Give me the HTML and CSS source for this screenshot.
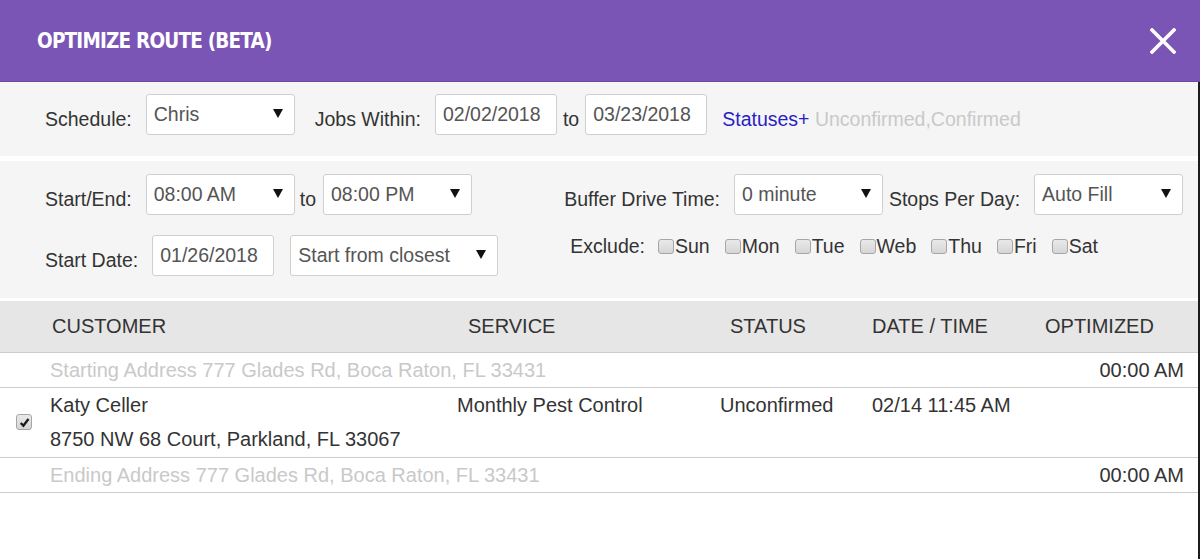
FILE: index.html
```html
<!DOCTYPE html>
<html>
<head>
<meta charset="utf-8">
<title>Optimize Route</title>
<link rel="stylesheet" href="styles.css">
</head>
<body>
<div class="modal">
  <header class="titlebar">
    <h1 class="title">OPTIMIZE ROUTE (BETA)</h1>
    <span class="close" aria-label="Close">
      <svg width="26" height="26" viewBox="0 0 26 26"><path d="M2 2 L24 24 M24 2 L2 24" stroke="#fff" stroke-width="3.6" stroke-linecap="square" fill="none"/></svg>
    </span>
  </header>
  <div class="content">
    <section class="panel panel-top">
      <span class="label">Schedule:</span>
      <div class="field select w-149"><span>Chris</span><svg class="arrow" width="10" height="9" viewBox="0 0 10 9"><path d="M0 0 H10 L5 9 Z" fill="#111"/></svg></div>
      <span class="label ml-20">Jobs Within:</span>
      <div class="field w-122">02/02/2018</div>
      <span class="label to">to</span>
      <div class="field w-122">03/23/2018</div>
      <span class="label statuses"><span class="link">Statuses+</span> <span class="muted">Unconfirmed,Confirmed</span></span>
    </section>
    <section class="panel panel-opts">
      <div class="col col-left">
        <div class="row">
          <span class="label">Start/End:</span>
          <div class="field select w-149"><span>08:00 AM</span><svg class="arrow" width="10" height="9" viewBox="0 0 10 9"><path d="M0 0 H10 L5 9 Z" fill="#111"/></svg></div>
          <span class="label to2">to</span>
          <div class="field select w-149"><span>08:00 PM</span><svg class="arrow" width="10" height="9" viewBox="0 0 10 9"><path d="M0 0 H10 L5 9 Z" fill="#111"/></svg></div>
        </div>
        <div class="row">
          <span class="label">Start Date:</span>
          <div class="field w-122">01/26/2018</div>
          <div class="field select w-208 ml-16"><span>Start from closest</span><svg class="arrow" width="10" height="9" viewBox="0 0 10 9"><path d="M0 0 H10 L5 9 Z" fill="#111"/></svg></div>
        </div>
      </div>
      <div class="col col-right">
        <div class="row">
          <span class="label">Buffer Drive Time:</span>
          <div class="field select w-149"><span>0 minute</span><svg class="arrow" width="10" height="9" viewBox="0 0 10 9"><path d="M0 0 H10 L5 9 Z" fill="#111"/></svg></div>
          <span class="label ml-6">Stops Per Day:</span>
          <div class="field select w-149"><span>Auto Fill</span><svg class="arrow" width="10" height="9" viewBox="0 0 10 9"><path d="M0 0 H10 L5 9 Z" fill="#111"/></svg></div>
        </div>
        <div class="exclude">
          <span class="ex-label">Exclude:</span>
          <span class="day"><span class="cb"></span>Sun</span>
          <span class="day"><span class="cb"></span>Mon</span>
          <span class="day"><span class="cb"></span>Tue</span>
          <span class="day"><span class="cb"></span>Web</span>
          <span class="day"><span class="cb"></span>Thu</span>
          <span class="day"><span class="cb"></span>Fri</span>
          <span class="day"><span class="cb"></span>Sat</span>
        </div>
      </div>
    </section>
    <div class="table">
      <div class="thead">
        <span>CUSTOMER</span>
        <span>SERVICE</span>
        <span>STATUS</span>
        <span>DATE / TIME</span>
        <span>OPTIMIZED</span>
      </div>
      <div class="row-addr">
        <span class="muted">Starting Address 777 Glades Rd, Boca Raton, FL 33431</span>
        <span>00:00 AM</span>
      </div>
      <div class="row-job">
        <span class="cb-cell"><span class="cb checked"><svg width="11" height="11" viewBox="0 0 10 10"><path d="M1.6 5.4 L4 8 L8.6 1.8" stroke="#1a1a1a" stroke-width="2.1" fill="none"/></svg></span></span>
        <span class="cust">Katy Celler<br>8750 NW 68 Court, Parkland, FL 33067</span>
        <span>Monthly Pest Control</span>
        <span>Unconfirmed</span>
        <span>02/14 11:45 AM</span>
        <span></span>
      </div>
      <div class="row-addr">
        <span class="muted">Ending Address 777 Glades Rd, Boca Raton, FL 33431</span>
        <span>00:00 AM</span>
      </div>
    </div>
  </div>
</div>
</body>
</html>
```

FILE: styles.css
```css
html, body {
  margin: 0;
  padding: 0;
  background: #fff;
}
body {
  font-family: "Liberation Sans", Arial, sans-serif;
  font-size: 19.5px;
  color: #333;
}
.modal {
  width: 1200px;
  height: 559px;
  display: flex;
  flex-direction: column;
  overflow: hidden;
}
.titlebar {
  height: 82px;
  box-sizing: border-box;
  background: #7a55b5;
  border-bottom: 1px solid #6c47a8;
  display: flex;
  align-items: center;
  justify-content: space-between;
  padding: 0 24px 0 37px;
}
.title {
  margin: 0;
  font-family: "DejaVu Sans Condensed", "DejaVu Sans", sans-serif;
  font-weight: bold;
  font-size: 20.5px;
  color: #fff;
  letter-spacing: -0.8px;
}
.close {
  display: flex;
  width: 26px;
  height: 26px;
}
.content {
  flex: 1;
  border-right: 2px solid #1c1c1c;
  display: flex;
  flex-direction: column;
}
.panel {
  background: #f5f5f5;
  display: flex;
}
.panel-top {
  align-items: flex-end;
  padding: 12px 0 21px 45px;
  margin-bottom: 5px;
}
.label {
  line-height: 24px;
  padding-bottom: 4px;
  margin-right: 14px;
  white-space: nowrap;
}
.ml-20 { margin-left: 20px; }
.ml-6 { margin-left: 6px; }
.ml-16 { margin-left: 16px; }
.to { margin: 0 6px 0 6px; }
.to2 { margin: 0 7px 0 5px; }
.statuses { margin-left: 15px; }
.link { color: #2a1fc2; }
.muted { color: #c9c9c9; }
.field {
  box-sizing: border-box;
  height: 41px;
  border: 1px solid #cfcfcf;
  border-radius: 3px;
  background: #fff;
  padding: 7px 7px 0 7px;
  line-height: 24px;
  color: #555;
  white-space: nowrap;
}
.select {
  display: flex;
  justify-content: space-between;
  align-items: flex-start;
  padding-right: 11px;
}
.select .arrow {
  margin-top: 7px;
  flex: none;
}
.w-149 { width: 149px; }
.w-122 { width: 122px; }
.w-208 { width: 208px; }
.panel-opts {
  padding: 13px 0 22px 45px;
  margin-bottom: 3px;
}
.col {
  display: flex;
  flex-direction: column;
  gap: 20px;
}
.col-right {
  margin-left: 66px;
}
.row {
  display: flex;
  align-items: flex-end;
}
.exclude {
  display: flex;
  align-items: center;
  padding-left: 6px;
  margin-top: -1px;
  line-height: 24px;
}
.ex-label { margin-right: 13px; }
.day {
  display: flex;
  align-items: center;
  margin-right: 15px;
}
.cb {
  flex: none;
  box-sizing: border-box;
  width: 16px;
  height: 15px;
  border: 1px solid #a6a6a6;
  border-radius: 3px;
  background: linear-gradient(#e9e9e9, #d6d6d6);
  margin-right: 1px;
  display: inline-flex;
  align-items: center;
  justify-content: center;
}
.table {
  display: flex;
  flex-direction: column;
  font-size: 20px;
}
.thead {
  background: #e6e6e6;
  height: 52px;
  box-sizing: border-box;
  border-bottom: 1px solid #cdcdcd;
  display: grid;
  grid-template-columns: 416px 262px 142px 173px 1fr;
  align-items: center;
  padding-left: 52px;
}
.row-addr {
  display: flex;
  justify-content: space-between;
  line-height: 34px;
  padding: 0 14px 0 50px;
  border-bottom: 1px solid #cdcdcd;
}
.row-job {
  display: grid;
  grid-template-columns: 50px 407px 263px 152px 173px 1fr;
  line-height: 34px;
  padding-bottom: 1px;
  border-bottom: 1px solid #cdcdcd;
}
.cb-cell {
  display: flex;
  align-items: center;
  padding-left: 16px;
}
.cb.checked {
  width: 16px;
  height: 16px;
}
```
